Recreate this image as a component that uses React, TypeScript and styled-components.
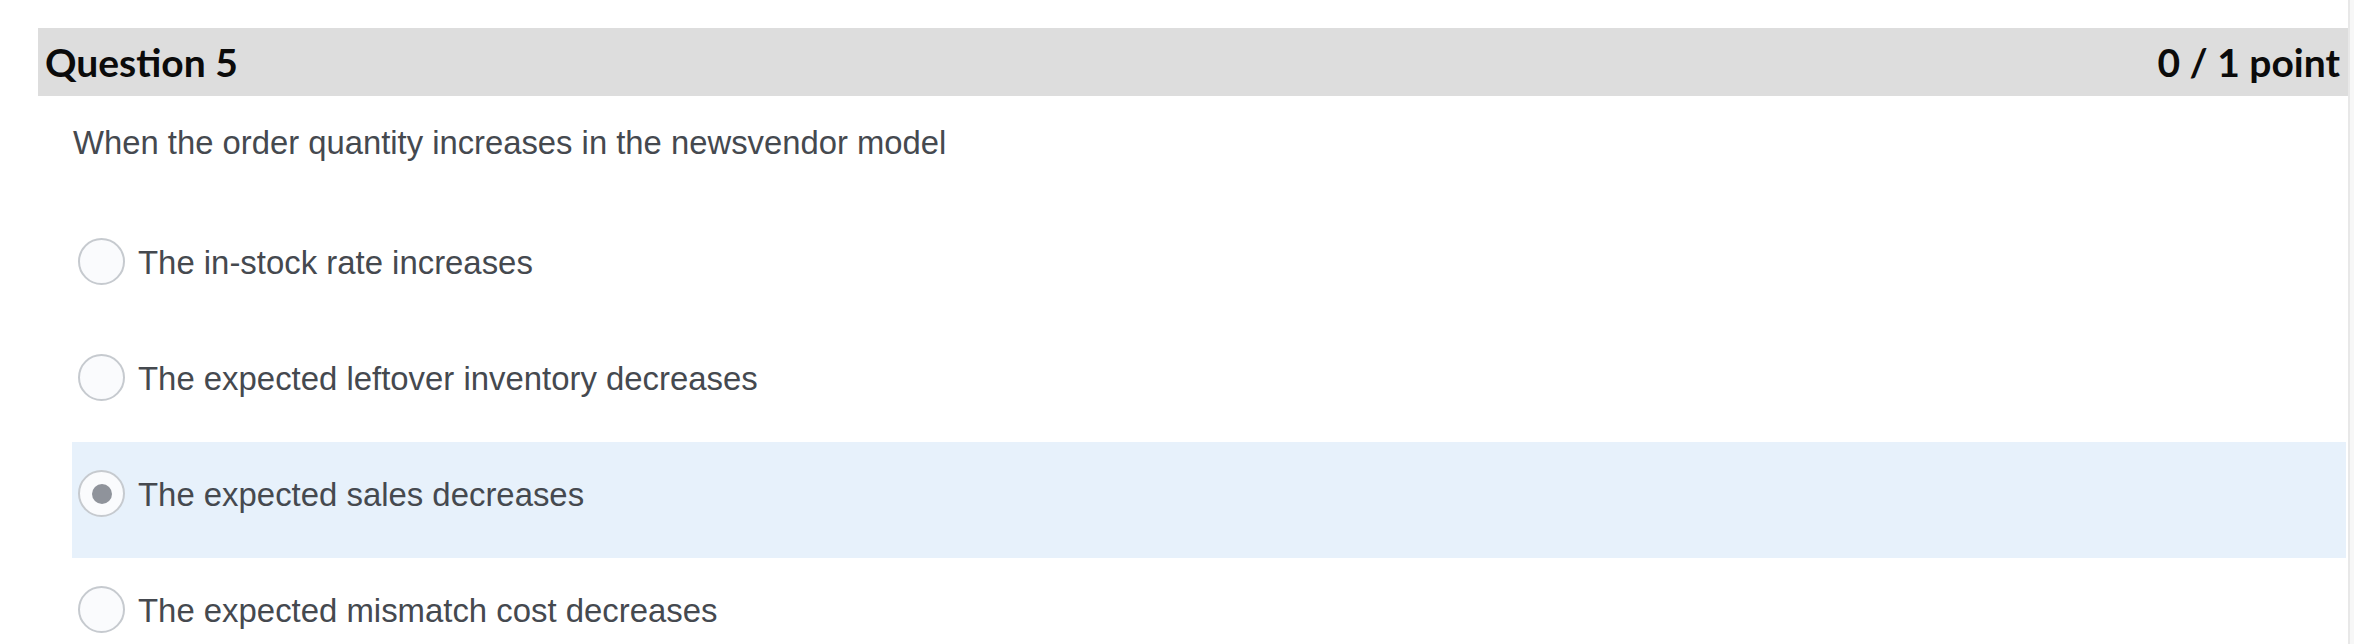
import React from 'react';
import styled, { createGlobalStyle } from 'styled-components';

const GlobalStyle = createGlobalStyle`
  html, body {
    margin: 0;
    padding: 0;
    background: #f7f7f7;
  }
  * {
    box-sizing: border-box;
  }
`;

const Page = styled.div`
  width: 2350px;
  min-height: 644px;
  background: #ffffff;
  border-right: 2px solid #e8e8e8;
  padding: 28px 0 0 38px;
`;

const Header = styled.div`
  height: 68px;
  background: #dddddd;
  display: flex;
  align-items: center;
  justify-content: space-between;
  padding: 0 8px 0 7px;
  font-family: Lato, 'Open Sans', sans-serif;
  font-weight: 700;
  font-size: 39px;
  line-height: 48px;
  color: #0b0b0b;
`;

const Body = styled.div`
  padding: 28px 2px 0 34px;
  font-family: 'Liberation Sans', Arial, sans-serif;
  font-size: 32.8px;
  line-height: 38px;
  color: #45494f;
`;

const Prompt = styled.p`
  margin: 0 0 48px 1px;
`;

const AnswerList = styled.div`
  display: flex;
  flex-direction: column;
`;

const AnswerRow = styled.label<{ $selected?: boolean }>`
  height: 116px;
  padding: 28px 0 0 6px;
  display: flex;
  align-items: flex-start;
  background: ${(p) => (p.$selected ? '#e7f1fb' : 'transparent')};
`;

const Inner = styled.span`
  display: flex;
  align-items: center;
  gap: 13px;
`;

const Radio = styled.span<{ $checked?: boolean }>`
  width: 47px;
  height: 47px;
  flex: none;
  border-radius: 50%;
  border: 2px solid #c6cacf;
  background: #fafbfd;
  display: flex;
  align-items: center;
  justify-content: center;

  &::after {
    content: '';
    width: 20px;
    height: 20px;
    border-radius: 50%;
    background: #8f939b;
    display: ${(p) => (p.$checked ? 'block' : 'none')};
  }
`;

const AnswerText = styled.span`
  white-space: nowrap;
  font-size: 32.9px;
  padding-top: 2px;
`;

const answers = [
  'The in-stock rate increases',
  'The expected leftover inventory decreases',
  'The expected sales decreases',
  'The expected mismatch cost decreases',
];

export default function App() {
  const selected = 2;
  return (
    <>
      <GlobalStyle />
      <Page>
        <Header>
          <span>Question 5</span>
          <span>0 / 1 point</span>
        </Header>
        <Body>
          <Prompt>When the order quantity increases in the newsvendor model</Prompt>
          <AnswerList>
            {answers.map((a, i) => (
              <AnswerRow key={a} $selected={i === selected}>
                <Inner>
                  <Radio $checked={i === selected} />
                  <AnswerText>{a}</AnswerText>
                </Inner>
              </AnswerRow>
            ))}
          </AnswerList>
        </Body>
      </Page>
    </>
  );
}
